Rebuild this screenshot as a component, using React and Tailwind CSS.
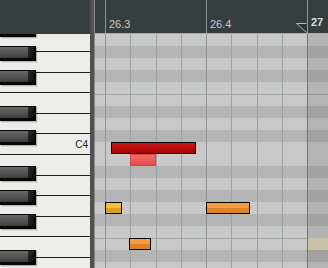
import React from "react";

const whiteKeys = ["B4", "A4", "G4", "F4", "E4", "D4", "C4", "B3", "A3", "G3", "F3", "E3", "D3", "C3"];
// top of each black key, measured from the top of the keyboard area
const blackKeys = [-12, 12, 36, 72, 96, 132, 156, 180, 216];

const lanes = ["A4", "G#4", "G4", "F#4", "F4", "E4", "D#4", "D4", "C#4", "C4", "B3", "A#3", "A3", "G#3", "G3", "F#3", "F3", "E3", "D#3", "D3"];

const gridLines = [
  { x: 10, kind: "beat" },
  { x: 35, kind: "sub" },
  { x: 61, kind: "sub" },
  { x: 86, kind: "sub" },
  { x: 111, kind: "beat" },
  { x: 136, kind: "sub" },
  { x: 162, kind: "sub" },
  { x: 187, kind: "sub" },
  { x: 212, kind: "bar" },
];

const notes = [
  { x: 16, y: 108, w: 85, cls: "bg-gradient-to-b from-[#cc1616] to-[#a80202] border border-black" },
  { x: 35, y: 120, w: 26, cls: "bg-gradient-to-b from-[#f46a6a] to-[#e44c4c] border border-[#d94444]" },
  { x: 10, y: 168, w: 17, cls: "bg-gradient-to-b from-[#f6bd38] from-50% to-[#d9a024] to-50% border border-black" },
  { x: 111, y: 168, w: 44, cls: "bg-gradient-to-b from-[#f69b3e] from-50% to-[#dc8426] to-50% border border-black" },
  { x: 34, y: 204, w: 22, cls: "bg-gradient-to-b from-[#f69b3e] from-50% to-[#dc8426] to-50% border border-black" },
];

function BlackKey({ top }) {
  return (
    <div
      className="absolute left-0 w-[36px] h-[15px] bg-[#070707] shadow-[1px_1px_1px_rgba(0,0,0,0.25)]"
      style={{ top }}
    >
      <div className="absolute left-0 top-[1px] w-[28px] h-[11px] bg-gradient-to-b from-[#686868] via-[#565656] to-[#3c3c3c]" />
      <div className="absolute left-[28px] top-[1px] w-[6px] h-[11px] bg-gradient-to-br from-[#2c2c2c] to-[#0c0c0c]" />
    </div>
  );
}

function Keyboard() {
  return (
    <div className="w-[90px] flex flex-col">
      <div className="h-[34px] bg-[#363d3f] shrink-0" />
      <div className="flex-1 relative overflow-hidden bg-[#ecece8]">
        <div className="flex flex-col mt-[-23px]">
          {whiteKeys.map((k) => (
            <div key={k} className="h-[20.571px] shrink-0 border-b border-[#1c1c1c] flex items-center justify-end pr-[2px] pt-[1px]">
              {k === "C4" && <span className="text-[10px] leading-none text-[#1a1a1a]">C4</span>}
            </div>
          ))}
        </div>
        {blackKeys.map((t) => (
          <BlackKey key={t} top={t} />
        ))}
      </div>
    </div>
  );
}

function Ruler() {
  return (
    <div className="h-[34px] shrink-0 bg-[#363d3f] border-b border-[#a6acac] flex pl-[10px]">
      <div className="w-[101px] shrink-0 border-l border-[#8e9696] flex items-end pl-[3px] pb-[3px]">
        <span className="text-[11px] leading-none text-[#c4c8c8]">26.3</span>
      </div>
      <div className="w-[101px] shrink-0 border-l border-[#8e9696] flex items-end pl-[3px] pb-[3px] relative">
        <span className="text-[11px] leading-none text-[#c4c8c8]">26.4</span>
        <svg className="absolute right-0 bottom-0" width="11" height="10" viewBox="0 0 11 10">
          <polygon points="0.5,0.5 10.5,0.5 10.5,9.5" fill="#2d3335" />
          <polyline points="10.5,0.5 0.5,0.5 10.5,9.5" fill="none" stroke="#b4b8b8" strokeWidth="1" />
        </svg>
      </div>
      <div className="flex-1 border-l border-[#8e9696] flex items-end pl-[3px] pb-[5px]">
        <span className="text-[11px] leading-none font-bold text-[#dcdede]">27</span>
      </div>
    </div>
  );
}

function NoteGrid() {
  return (
    <div className="flex-1 relative overflow-hidden">
      <div className="flex flex-col">
        {lanes.map((n) => (
          <div
            key={n}
            className={
              "h-[12px] shrink-0 " +
              (n.includes("#") ? "bg-[#b4b4b4] " : "bg-[#c9c9c9] ") +
              (n.startsWith("E") ? "border-t border-[#a2a9a9]" : "")
            }
          />
        ))}
      </div>

      {/* outside the loop range */}
      <div className="absolute left-[213px] right-0 top-0 bottom-0 bg-black/10" />
      <div className="absolute left-[213px] right-0 top-[204px] h-[12px] bg-[#c8c0a7]" />

      {gridLines.map((l) => (
        <div
          key={l.x}
          className={
            "absolute top-0 bottom-0 w-px " +
            (l.kind === "bar" ? "bg-[#6e7878]" : l.kind === "beat" ? "bg-[#8d9797]" : "bg-[#9aa4a4]")
          }
          style={{ left: l.x }}
        />
      ))}

      {notes.map((n, i) => (
        <div
          key={i}
          className={"absolute h-[12px] " + n.cls}
          style={{ left: n.x, top: n.y, width: n.w }}
        />
      ))}
    </div>
  );
}

export default function App() {
  return (
    <div className="w-[328px] h-[268px] overflow-hidden flex bg-[#363d3f] font-['Liberation_Sans',Arial,sans-serif]">
      <Keyboard />
      <div className="w-[4px] shrink-0 bg-[#525252]" />
      <div className="w-px shrink-0 bg-[#8a8a8a]" />
      <div className="flex-1 flex flex-col">
        <Ruler />
        <NoteGrid />
      </div>
    </div>
  );
}
